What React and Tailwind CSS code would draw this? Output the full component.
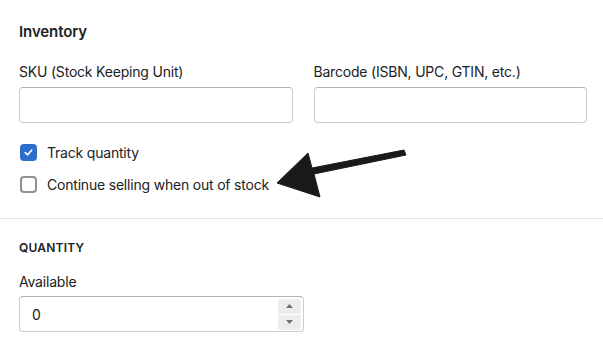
import React from "react";

function Checkbox({ checked }) {
  if (checked) {
    return (
      <span className="flex h-[17px] w-[17px] items-center justify-center rounded-[4px] bg-[#2c6ecb]">
        <svg width="11" height="11" viewBox="0 0 12 12" fill="none">
          <path d="M2.5 6.2 L5 8.5 L9.5 3.5" stroke="white" strokeWidth="1.8" strokeLinecap="round" strokeLinejoin="round" />
        </svg>
      </span>
    );
  }
  return <span className="block h-[17px] w-[17px] rounded-[4px] border-2 border-[#8c9196] bg-white" />;
}

export default function App() {
  return (
    <div className="relative h-[347px] w-[603px] overflow-hidden bg-white text-[#202223] tracking-[-0.2px]" style={{ fontFamily: "Inter, 'Noto Sans', sans-serif" }}>
      <div className="pl-[19px] pr-[16px] pt-[22px]">
        <h2 className="text-[15px] font-semibold leading-[20px] tracking-[-0.1px]">Inventory</h2>
        <div className="mt-[20px] grid grid-cols-2 gap-[21px]">
          <div>
            <label className="block text-[14px] leading-[20px]">SKU (Stock Keeping Unit)</label>
            <div className="mt-[5px] h-[36px] rounded-[4px] border border-[#c9cccf] border-t-[#aeb4b9] bg-white" />
          </div>
          <div>
            <label className="block text-[14px] leading-[20px]">Barcode (ISBN, UPC, GTIN, etc.)</label>
            <div className="mt-[5px] h-[36px] rounded-[4px] border border-[#c9cccf] border-t-[#aeb4b9] bg-white" />
          </div>
        </div>
        <div className="mt-[21px] flex flex-col gap-[15px] pl-[1px]">
          <div className="flex items-center gap-[10px]">
            <Checkbox checked />
            <span className="text-[14px] leading-[17px]">Track quantity</span>
          </div>
          <div className="flex items-center gap-[10px]">
            <Checkbox />
            <span className="text-[14px] leading-[17px]">Continue selling when out of stock</span>
          </div>
        </div>
      </div>
      <div className="mt-[25px] h-px bg-[#e1e3e5]" />
      <div className="px-[19px] pt-[21px]">
        <h3 className="text-[12px] font-semibold uppercase leading-[16px] tracking-[0.2px]">Quantity</h3>
        <label className="mt-[16px] block text-[14px] leading-[20px]">Available</label>
        <div className="mt-[4px] flex h-[36px] w-[285px] items-center rounded-[4px] border border-[#c9cccf] border-t-[#aeb4b9] bg-white pl-[12px] pr-[2px]">
          <span className="flex-1 text-[14px]">0</span>
          <div className="flex flex-col gap-[1px]">
            <div className="flex h-[15px] w-[23px] items-center justify-center rounded-t-[3px] bg-[#ebedef]">
              <svg width="7" height="4" viewBox="0 0 7 4"><path d="M0 4 L3.5 0 L7 4 Z" fill="#6d7175" /></svg>
            </div>
            <div className="flex h-[15px] w-[23px] items-center justify-center rounded-b-[3px] bg-[#ebedef]">
              <svg width="7" height="4" viewBox="0 0 7 4"><path d="M0 0 L3.5 4 L7 0 Z" fill="#6d7175" /></svg>
            </div>
          </div>
        </div>
      </div>
      <svg className="absolute left-0 top-0" width="603" height="347" viewBox="0 0 603 347">
        <path d="M404 150 L406 155 L314 174 L320 197 L277 183 L308 153 L312 168 Z" fill="#1a1a1a" stroke="#1a1a1a" strokeWidth="1" strokeLinejoin="round" />
      </svg>
    </div>
  );
}
